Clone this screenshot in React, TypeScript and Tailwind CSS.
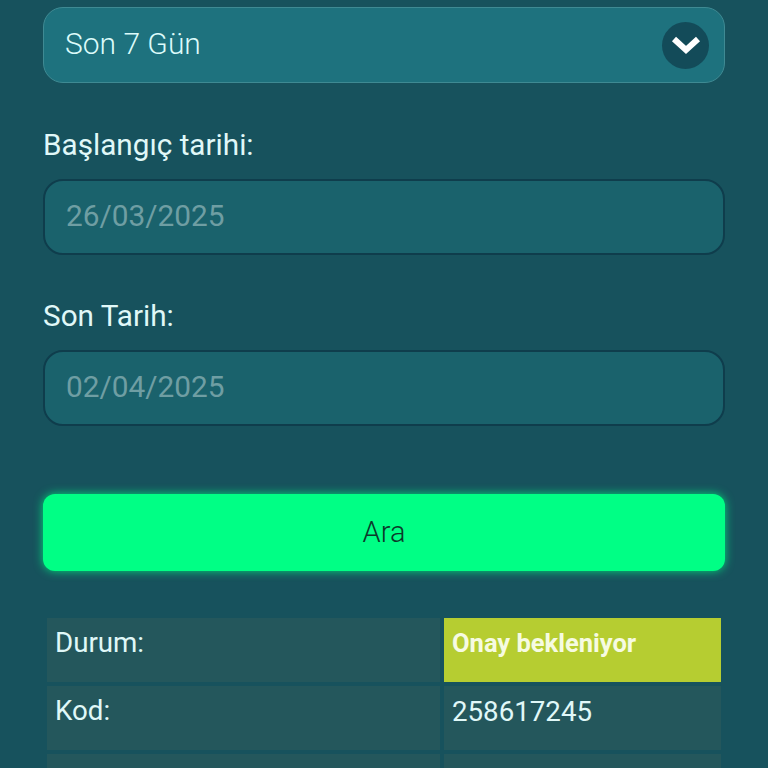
import React from "react";

const font = "font-['Roboto',sans-serif]";

function DateField({ label, value }: { label: string; value: string }) {
  return (
    <div className="flex flex-col">
      <label className="text-[29.7px] leading-[33px] text-[#e0f8f8]">{label}</label>
      <div className="mt-[18px] flex h-[76px] items-center rounded-[20px] border-2 border-[#0f3d4c] bg-[#1a626c] px-[21px] pb-[2px] text-[29.8px] text-[#6f9ea3]">
        {value}
      </div>
    </div>
  );
}

function Row({ label, children, highlight }: { label: string; children: React.ReactNode; highlight?: boolean }) {
  return (
    <div className="grid grid-cols-[393px_277px] gap-x-[4px]">
      <div className="h-[64px] bg-[#24575c] px-[8px] pt-[9px] text-[27.7px] leading-[32px] text-[#e0f8f8]">{label}</div>
      <div
        className={
          highlight
            ? "h-[64px] bg-[#b6cd31] px-[8px] pt-[9px] text-[25.5px] leading-[32px] font-bold text-[#f6fbe2]"
            : "h-[64px] bg-[#24575c] px-[8px] pt-[10px] text-[27.7px] leading-[32px] text-[#e0f8f8]"
        }
      >
        {children}
      </div>
    </div>
  );
}

export default function App() {
  return (
    <div className={`${font} h-[768px] overflow-hidden bg-[#17525d] px-[43px] pt-[7px]`}>
      <div className="flex h-[76px] items-center justify-between rounded-[20px] border border-[#3f8a93] bg-[#1e727e] pb-[4px] pl-[21px] pr-[15px] text-[30px] font-light text-[#dcfbfa]">
        <span>Son 7 Gün</span>
        <span className="mt-[4px] flex h-[47px] w-[47px] items-center justify-center rounded-full bg-[#134b59]">
          <svg viewBox="0 0 30 20" className="h-[20px] w-[30px]" fill="none">
            <path d="M3 4 L15 15 L27 4" stroke="#ffffff" strokeWidth="6" strokeLinejoin="miter" />
          </svg>
        </span>
      </div>

      <div className="mt-[45px] flex flex-col gap-[44px]">
        <DateField label="Başlangıç tarihi:" value="26/03/2025" />
        <DateField label="Son Tarih:" value="02/04/2025" />
      </div>

      <button className="mt-[68px] flex h-[77px] w-full items-center justify-center rounded-[12px] bg-[#00ff85] text-[29px] font-light text-[#0c3a2a] shadow-[0_0_10px_#00d97a]">
        Ara
      </button>

      <div className="mt-[47px] flex flex-col gap-[4px] px-[4px]">
        <Row label="Durum:" highlight>Onay bekleniyor</Row>
        <Row label="Kod:">258617245</Row>
        <Row label="Süre:">Son 7 Gün</Row>
      </div>
    </div>
  );
}
